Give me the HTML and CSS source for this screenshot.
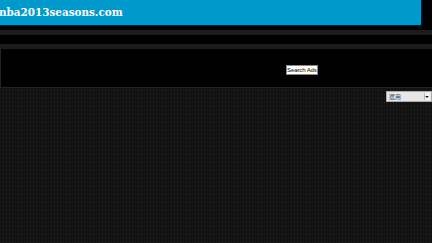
FILE: index.html
```html
<!DOCTYPE html>
<html lang="en">
<head>
    <meta charset="UTF-8">
    <title>nba2013seasons.com</title>
    <link rel="stylesheet" href="styles.css">
</head>
<body>
    <div class="top">
        <div class="header">
            <h1 class="logo">nba2013seasons.com</h1>
        </div>
    </div>
    <div class="bar"></div>
    <div class="gap"></div>
    <div class="bar"></div>
    <div class="ads">
        <button class="search">Search Ads</button>
    </div>
    <div class="lang">
        <div class="lang-box">
            <select class="lang-select">
                <option>選用</option>
            </select>
        </div>
    </div>
</body>
</html>
```

FILE: styles.css
```css
body {
    margin: 0;
    background-color: #111111;
    background-image:
        repeating-linear-gradient(90deg, rgba(255,255,255,0.025) 0 1px, transparent 1px 3px),
        repeating-linear-gradient(0deg, rgba(255,255,255,0.02) 0 1px, transparent 1px 4px);
    font-family: 'Liberation Sans', Arial, sans-serif;
    height: 243px;
    overflow: hidden;
}
.top {
    background: #000;
    height: 30px;
}
.header {
    width: 421px;
    height: 25px;
    background: #0099cc;
}
.logo {
    margin: 0;
    padding: 6px 0 0 0;
    font-family: 'DejaVu Serif', serif;
    font-size: 10.4px;
    font-weight: bold;
    color: #fff;
    line-height: 13px;
    position: relative;
    left: -1px;
}
.bar {
    height: 5px;
    background: #1c1c1c;
}
.gap {
    height: 9px;
    background: #000;
}
.ads {
    height: 38px;
    background: #000;
    border-left: 1px solid #222;
    border-bottom: 1px solid #222;
    display: flex;
    align-items: center;
    padding-left: 285px;
}
.search {
    font-family: 'Liberation Sans', Arial, sans-serif;
    font-size: 6px;
    letter-spacing: -0.1px;
    padding: 0;
    height: 10px;
    line-height: 8px;
    border: 1px solid #888;
    background: #fff;
    color: #000;
    border-radius: 0;
    margin-top: 3px;
}
.lang {
    display: flex;
    justify-content: flex-end;
    padding-top: 3px;
}
.lang-box {
    position: relative;
    width: 46px;
    height: 11px;
}
.lang-select {
    appearance: none;
    -webkit-appearance: none;
    width: 46px;
    height: 11px;
    font-size: 6px;
    line-height: 9px;
    padding: 0 0 0 2px;
    border: 1px solid #aaa;
    background: #e6e6e6;
    color: #444;
    font-family: 'Noto Sans CJK TC', sans-serif;
    border-radius: 0;
    display: block;
}
.lang-box::after {
    content: '';
    position: absolute;
    right: 2px;
    top: 2px;
    width: 5px;
    height: 7px;
    background: #f4f4f4;
    border-left: 1px solid #bbb;
}
.lang-box::before {
    content: '';
    position: absolute;
    right: 3px;
    top: 5px;
    border-left: 2px solid transparent;
    border-right: 2px solid transparent;
    border-top: 2px solid #222;
    z-index: 1;
}
```
